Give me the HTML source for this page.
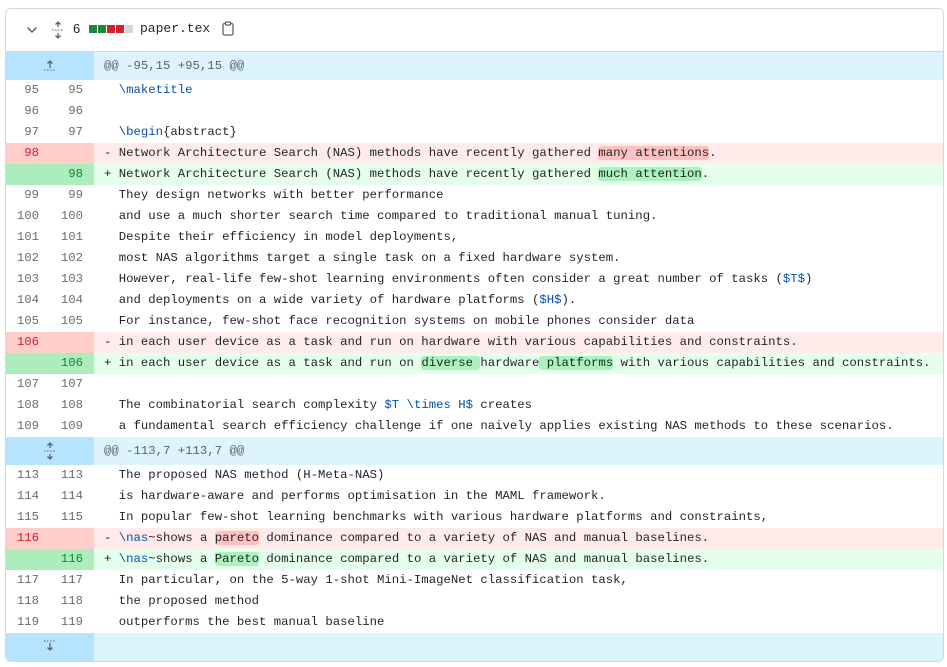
<!DOCTYPE html>
<html><head><meta charset="utf-8"><style>
body{margin:0;background:#fff;width:947px;height:667px;overflow:hidden;font-family:"Liberation Sans",sans-serif}
.box{position:absolute;left:5px;top:8px;width:937px;height:652px;border:1px solid #d0d7de;border-radius:6px;overflow:hidden}
.hdr{height:42px;background:#fff;border-bottom:1px solid #d0d7de;position:relative}
.mono{font-family:"Liberation Mono",monospace;font-size:12.3px}
.row{height:21px;line-height:21px;position:relative;white-space:pre;color:#1f2328}
.n{position:absolute;top:0;height:100%;width:44px;text-align:right;box-sizing:border-box;padding-right:11px;color:#656d76}
.n1{left:0}.n2{left:44px}
.c{position:absolute;left:98px;top:0}
.hunk{height:28px;line-height:28px;background:#ddf4ff;position:relative;color:#59636e}
.hunk .g{position:absolute;left:0;top:0;width:88px;height:100%;background:#b6e3ff}
.del{background:#ffebe9}.del .n{background:#ffcecb;color:#cf222e}
.add{background:#e6ffec}.add .n{background:#aceebb;color:#1a7f37}
.hd{background:#ff818266;border-radius:3px}.ha{background:#abf2bc;border-radius:3px}
.b{color:#0550ae}
.sq{display:inline-block;width:8px;height:8px;margin-right:1px}
</style></head><body>
<div class="box">
<div class="hdr">
<svg style="position:absolute;left:20px;top:17px" width="12" height="8" viewBox="0 0 12 8"><path d="M1.5 1.5 6 6 10.5 1.5" fill="none" stroke="#59636e" stroke-width="1.5"/></svg>
<svg style="position:absolute;left:45px;top:12px" width="14" height="18" viewBox="0 0 14 18"><path d="M7 1v5M4.5 3.5 7 1 9.5 3.5M7 17v-5M4.5 14.5 7 17 9.5 14.5" fill="none" stroke="#59636e" stroke-width="1.3"/><path d="M1 9h12" stroke="#59636e" stroke-width="1" stroke-dasharray="1.5 1.5"/></svg>
<span style="position:absolute;left:67px;top:12px;font-size:13px;color:#1f2328">6</span>
<span style="position:absolute;left:83px;top:16px;line-height:0"><span class="sq" style="background:#1f883d"></span><span class="sq" style="background:#1f883d"></span><span class="sq" style="background:#cf222e"></span><span class="sq" style="background:#cf222e"></span><span class="sq" style="background:#d0d7de"></span></span>
<span class="mono" style="position:absolute;left:134px;top:12px;font-size:13px;color:#1f2328">paper.tex</span>
<svg style="position:absolute;left:216px;top:12px" width="12" height="15" viewBox="0 0 12 15"><rect x="1" y="2.5" width="10" height="11.5" rx="1.5" fill="none" stroke="#59636e" stroke-width="1.3"/><rect x="3.5" y="1" width="5" height="3" rx="0.5" fill="#fff" stroke="#59636e" stroke-width="1.2"/></svg>
</div>
<div class="mono">
<div class="hunk"><div class="g"></div><svg style="position:absolute;left:37px;top:7px" width="14" height="12" viewBox="0 0 14 12"><path d="M7 9V2M4.5 4.5 7 2 9.5 4.5" fill="none" stroke="#59636e" stroke-width="1.3"/><path d="M1 11h12" stroke="#59636e" stroke-dasharray="1.5 1.5"/></svg><span class="c">@@ -95,15 +95,15 @@</span></div>
<div class="row"><span class="n n1">95</span><span class="n n2">95</span><span class="c">  <span class="b">\maketitle</span></span></div>
<div class="row"><span class="n n1">96</span><span class="n n2">96</span><span class="c"> </span></div>
<div class="row"><span class="n n1">97</span><span class="n n2">97</span><span class="c">  <span class="b">\begin</span>{abstract}</span></div>
<div class="row del"><span class="n n1">98</span><span class="n n2"></span><span class="c">- Network Architecture Search (NAS) methods have recently gathered <span class="hd">many attentions</span>.</span></div>
<div class="row add"><span class="n n1"></span><span class="n n2">98</span><span class="c">+ Network Architecture Search (NAS) methods have recently gathered <span class="ha">much attention</span>.</span></div>
<div class="row"><span class="n n1">99</span><span class="n n2">99</span><span class="c">  They design networks with better performance</span></div>
<div class="row"><span class="n n1">100</span><span class="n n2">100</span><span class="c">  and use a much shorter search time compared to traditional manual tuning.</span></div>
<div class="row"><span class="n n1">101</span><span class="n n2">101</span><span class="c">  Despite their efficiency in model deployments,</span></div>
<div class="row"><span class="n n1">102</span><span class="n n2">102</span><span class="c">  most NAS algorithms target a single task on a fixed hardware system.</span></div>
<div class="row"><span class="n n1">103</span><span class="n n2">103</span><span class="c">  However, real-life few-shot learning environments often consider a great number of tasks (<span class="b">$T$</span>)</span></div>
<div class="row"><span class="n n1">104</span><span class="n n2">104</span><span class="c">  and deployments on a wide variety of hardware platforms (<span class="b">$H$</span>).</span></div>
<div class="row"><span class="n n1">105</span><span class="n n2">105</span><span class="c">  For instance, few-shot face recognition systems on mobile phones consider data</span></div>
<div class="row del"><span class="n n1">106</span><span class="n n2"></span><span class="c">- in each user device as a task and run on hardware with various capabilities and constraints.</span></div>
<div class="row add"><span class="n n1"></span><span class="n n2">106</span><span class="c">+ in each user device as a task and run on <span class="ha">diverse </span>hardware<span class="ha"> platforms</span> with various capabilities and constraints.</span></div>
<div class="row"><span class="n n1">107</span><span class="n n2">107</span><span class="c"> </span></div>
<div class="row"><span class="n n1">108</span><span class="n n2">108</span><span class="c">  The combinatorial search complexity <span class="b">$T \times H$</span> creates</span></div>
<div class="row"><span class="n n1">109</span><span class="n n2">109</span><span class="c">  a fundamental search efficiency challenge if one naively applies existing NAS methods to these scenarios.</span></div>
<div class="hunk"><div class="g"></div><svg style="position:absolute;left:37px;top:5px" width="14" height="18" viewBox="0 0 14 18"><path d="M7 1v5M4.5 3.5 7 1 9.5 3.5M7 17v-5M4.5 14.5 7 17 9.5 14.5" fill="none" stroke="#59636e" stroke-width="1.3"/><path d="M1 9h12" stroke="#59636e" stroke-dasharray="1.5 1.5"/></svg><span class="c">@@ -113,7 +113,7 @@</span></div>
<div class="row"><span class="n n1">113</span><span class="n n2">113</span><span class="c">  The proposed NAS method (H-Meta-NAS)</span></div>
<div class="row"><span class="n n1">114</span><span class="n n2">114</span><span class="c">  is hardware-aware and performs optimisation in the MAML framework.</span></div>
<div class="row"><span class="n n1">115</span><span class="n n2">115</span><span class="c">  In popular few-shot learning benchmarks with various hardware platforms and constraints,</span></div>
<div class="row del"><span class="n n1">116</span><span class="n n2"></span><span class="c">- <span class="b">\nas</span>~shows a <span class="hd">pareto</span> dominance compared to a variety of NAS and manual baselines.</span></div>
<div class="row add"><span class="n n1"></span><span class="n n2">116</span><span class="c">+ <span class="b">\nas</span>~shows a <span class="ha">Pareto</span> dominance compared to a variety of NAS and manual baselines.</span></div>
<div class="row"><span class="n n1">117</span><span class="n n2">117</span><span class="c">  In particular, on the 5-way 1-shot Mini-ImageNet classification task,</span></div>
<div class="row"><span class="n n1">118</span><span class="n n2">118</span><span class="c">  the proposed method</span></div>
<div class="row"><span class="n n1">119</span><span class="n n2">119</span><span class="c">  outperforms the best manual baseline</span></div>
<div class="hunk"><div class="g"></div><svg style="position:absolute;left:37px;top:7px" width="14" height="12" viewBox="0 0 14 12"><path d="M1 1h12" stroke="#59636e" stroke-dasharray="1.5 1.5"/><path d="M7 3v7M4.5 7.5 7 10 9.5 7.5" fill="none" stroke="#59636e" stroke-width="1.3"/></svg></div>
</div>
</div>
</body></html>
